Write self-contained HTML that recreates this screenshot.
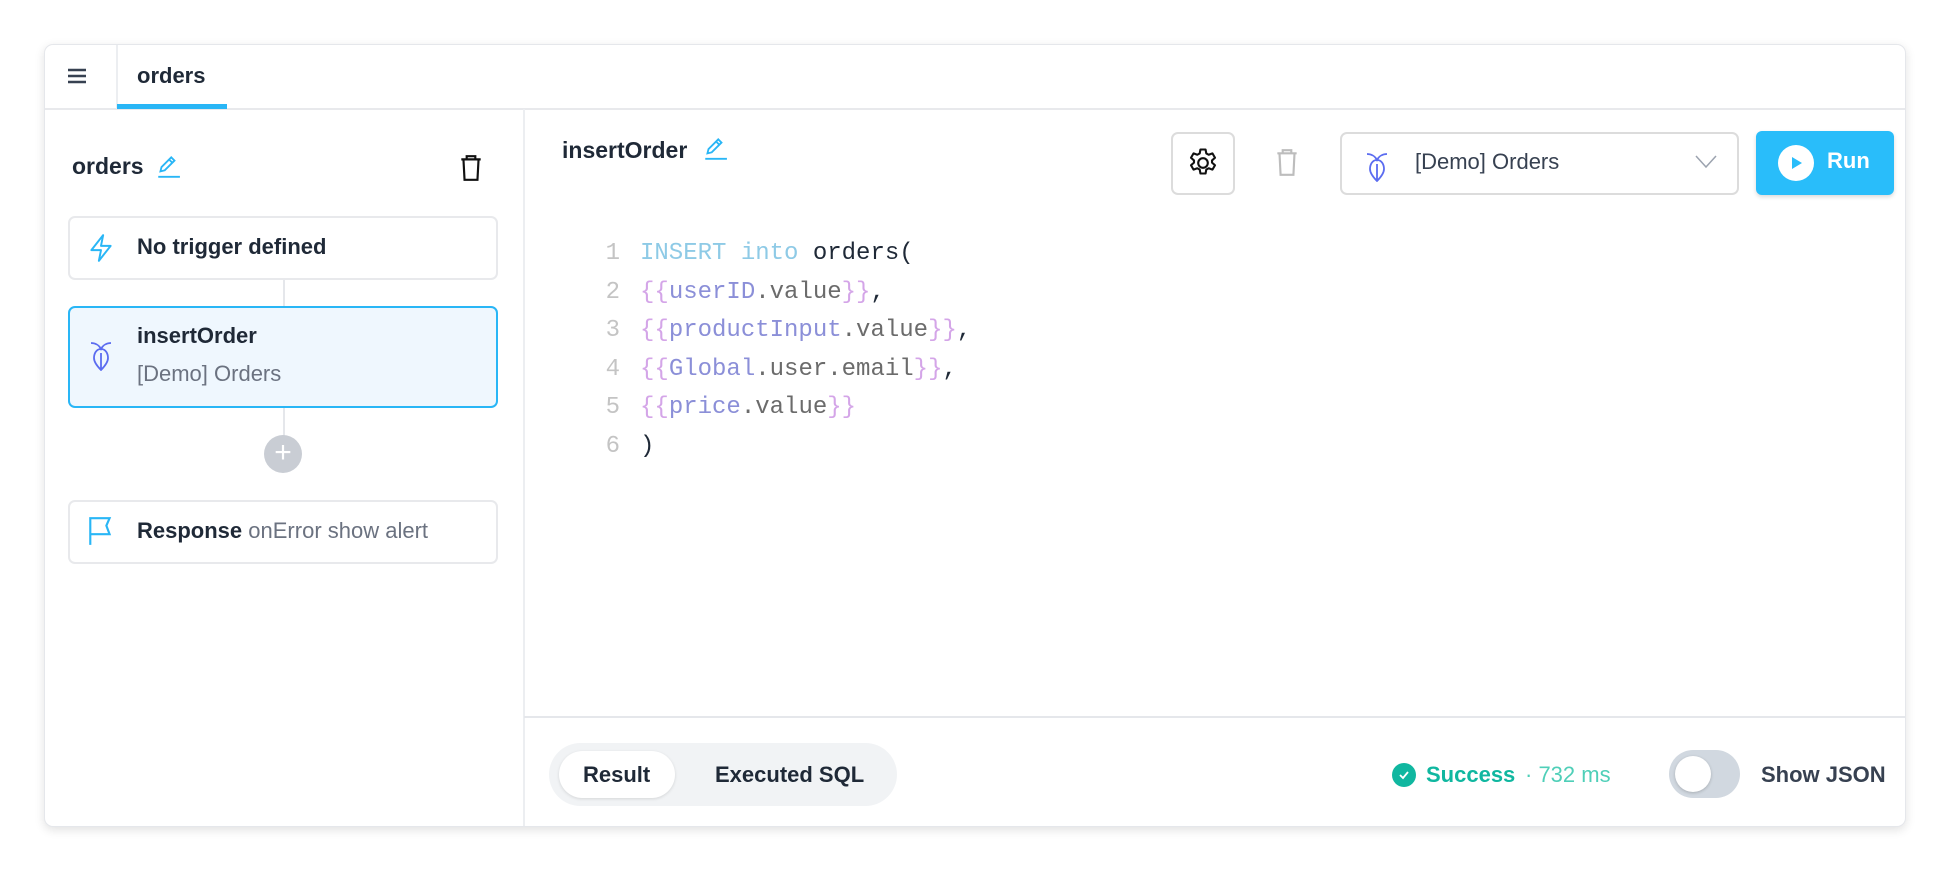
<!DOCTYPE html>
<html><head><meta charset="utf-8"><style>
*{box-sizing:border-box;margin:0;padding:0}
body{width:1950px;height:872px;background:#fff;font-family:"Liberation Sans",sans-serif;color:#1f2937;position:relative;overflow:hidden}
.card{position:absolute;left:44px;top:44px;width:1862px;height:783px;border:1px solid #e5e7eb;border-radius:9px;box-shadow:0 3px 10px rgba(0,0,0,0.12);background:#fff;overflow:hidden}
.abs{position:absolute}
.tabbar{left:0;top:0;width:100%;height:65px;border-bottom:2px solid #e8e9ec}
.box{position:absolute;left:23px;width:430px;border:2px solid #e8e9ec;border-radius:7px;background:#fff}
.t{font-size:22px;font-weight:700;color:#1f2937}
.code{font-family:"Liberation Mono",monospace;font-size:24px;line-height:38.5px;position:absolute;left:551px;top:190px;color:#1f2937}
.ln{display:inline-block;width:24px;text-align:right;color:#c4c4c4;margin-right:20px}
.kw{color:#8ecae6}.br{color:#d4a5e8}.v{color:#8b8fd8}.p{color:#6b6b6b}
</style></head><body>
<div class="card">
 <div class="abs tabbar"></div>
 <div class="abs" style="left:71px;top:0;width:2px;height:64px;background:#eceef1"></div>
 <svg class="abs" style="left:22px;top:22px" width="20" height="18" viewBox="0 0 20 18"><path d="M1 3h18M1 9h18M1 15h18" stroke="#374151" stroke-width="2.6"/></svg>
 <div class="abs t" style="left:92px;top:18px;font-size:22px">orders</div>
 <div class="abs" style="left:72px;top:59px;width:110px;height:5px;background:#29b6f6"></div>
 <div class="abs" style="left:478px;top:64px;width:2px;height:720px;background:#eceef1"></div>
 <!-- left -->
 <div class="abs t" style="left:27px;top:108px;font-size:23px">orders</div>
 <svg class="abs" style="left:110px;top:108px" width="26" height="26" viewBox="0 0 24 24"><path d="M5 17l1-4 9-9 3 3-9 9-4 1zM13 6l3 3M3 22h20" stroke="#29b6f6" stroke-width="1.7" fill="none"/></svg>
 <svg class="abs" style="left:413px;top:109px" width="26" height="28" viewBox="0 0 24 26"><path d="M3 5h18M8 5V2h8v3M5 5l1 19h12l1-19" stroke="#111" stroke-width="2" fill="none"/></svg>
 <div class="box" style="top:171px;height:64px"></div>
 <svg class="abs" style="left:43px;top:188px" width="26" height="30" viewBox="0 0 24 28"><path d="M14 2L3 16h9l-2 10 11-14h-9z" stroke="#29b6f6" stroke-width="1.8" fill="none" stroke-linejoin="round"/></svg>
 <div class="abs t" style="left:92px;top:189px">No trigger defined</div>
 <div class="abs" style="left:238px;top:235px;width:2px;height:26px;background:#e5e7eb"></div>
 <div class="box" style="top:261px;height:102px;border-color:#29b6f6;background:#eff7fe"></div>
 <svg class="abs" style="left:44px;top:294px" width="24" height="32" viewBox="0 0 24 32"><path d="M2 4c4 0 8 2 10 6 2-4 6-6 10-6M12 10c-5 0-7 5-7 9 0 4 4 9 7 12 3-3 7-8 7-12 0-4-2-9-7-9zM12 14v16" stroke="#5b6cf0" stroke-width="1.8" fill="none"/></svg>
 <div class="abs t" style="left:92px;top:278px">insertOrder</div>
 <div class="abs" style="left:92px;top:316px;font-size:22px;color:#6b7280">[Demo] Orders</div>
 <div class="abs" style="left:238px;top:363px;width:2px;height:28px;background:#e5e7eb"></div>
 <div class="abs" style="left:219px;top:390px;width:38px;height:38px;border-radius:50%;background:#c9cdd4;color:#fff;font-size:30px;text-align:center;line-height:36px">+</div>
 <div class="box" style="top:455px;height:64px"></div>
 <svg class="abs" style="left:43px;top:471px" width="26" height="30" viewBox="0 0 24 28"><path d="M2 27V2h18l-3 7 3 8H2" stroke="#29b6f6" stroke-width="2" fill="none"/></svg>
 <div class="abs" style="left:92px;top:473px;font-size:22px"><b>Response</b> <span style="color:#6b7280">onError show alert</span></div>
 <!-- right -->
 <div class="abs t" style="left:517px;top:92px;font-size:23px">insertOrder</div>
 <svg class="abs" style="left:657px;top:90px" width="26" height="26" viewBox="0 0 24 24"><path d="M5 17l1-4 9-9 3 3-9 9-4 1zM13 6l3 3M3 22h20" stroke="#29b6f6" stroke-width="1.7" fill="none"/></svg>
 <div class="abs" style="left:1126px;top:87px;width:64px;height:63px;border:2px solid #dcdcdc;border-radius:7px"></div>
 <svg class="abs" style="left:1140px;top:100px" width="36" height="36" viewBox="0 0 24 24"><path d="M10.3 2h3.4l.5 2.6 1.6.9 2.5-.9 1.7 2.9-2 1.8v1.4l2 1.8-1.7 2.9-2.5-.9-1.6.9-.5 2.6h-3.4l-.5-2.6-1.6-.9-2.5.9-1.7-2.9 2-1.8v-1.4l-2-1.8 1.7-2.9 2.5.9 1.6-.9z" transform="translate(0 1)" stroke="#111" stroke-width="1.4" fill="none" stroke-linejoin="round"/><circle cx="12" cy="12" r="3.2" stroke="#111" stroke-width="1.4" fill="none"/></svg>
 <svg class="abs" style="left:1229px;top:103px" width="26" height="30" viewBox="0 0 24 28"><path d="M3 5h18M8 5V2h8v3M5 5l1 20h12l1-20" stroke="#bdbdbd" stroke-width="2" fill="none"/></svg>
 <div class="abs" style="left:1295px;top:87px;width:399px;height:63px;border:2px solid #dcdcdc;border-radius:7px"></div>
 <svg class="abs" style="left:1320px;top:105px" width="24" height="32" viewBox="0 0 24 32"><path d="M2 4c4 0 8 2 10 6 2-4 6-6 10-6M12 10c-5 0-7 5-7 9 0 4 4 9 7 12 3-3 7-8 7-12 0-4-2-9-7-9zM12 14v16" stroke="#5b6cf0" stroke-width="1.8" fill="none"/></svg>
 <div class="abs" style="left:1370px;top:104px;font-size:22px;color:#374151">[Demo] Orders</div>
 <svg class="abs" style="left:1650px;top:110px" width="22" height="14" viewBox="0 0 22 14"><path d="M1 1l10 11L21 1" stroke="#9ca3af" stroke-width="1.5" fill="none"/></svg>
 <div class="abs" style="left:1711px;top:86px;width:138px;height:64px;background:#29bdfa;border-radius:6px;box-shadow:0 2px 4px rgba(0,0,0,0.15)"></div>
 <div class="abs" style="left:1733px;top:100px;width:36px;height:36px;border-radius:50%;background:#fff"></div>
 <svg class="abs" style="left:1745px;top:110px" width="14" height="16" viewBox="0 0 14 16"><path d="M2 2l10 6-10 6z" fill="#29bdfa"/></svg>
 <div class="abs" style="left:1782px;top:103px;font-size:22px;color:#fff;font-weight:700">Run</div>
 <div class="code">
  <div><span class="ln">1</span><span class="kw">INSERT into</span> orders(</div>
  <div><span class="ln">2</span><span class="br">{{</span><span class="v">userID</span><span class="p">.value</span><span class="br">}}</span>,</div>
  <div><span class="ln">3</span><span class="br">{{</span><span class="v">productInput</span><span class="p">.value</span><span class="br">}}</span>,</div>
  <div><span class="ln">4</span><span class="br">{{</span><span class="v">Global</span><span class="p">.user.email</span><span class="br">}}</span>,</div>
  <div><span class="ln">5</span><span class="br">{{</span><span class="v">price</span><span class="p">.value</span><span class="br">}}</span></div>
  <div><span class="ln">6</span>)</div>
 </div>
 <div class="abs" style="left:479px;top:671px;width:1383px;height:2px;background:#e5e7eb"></div>
 <div class="abs" style="left:504px;top:698px;width:348px;height:63px;border-radius:32px;background:#f1f3f5"></div>
 <div class="abs" style="left:514px;top:706px;width:116px;height:47px;border-radius:24px;background:#fff;box-shadow:0 1px 3px rgba(0,0,0,0.12)"></div>
 <div class="abs" style="left:538px;top:717px;font-size:22px;font-weight:700">Result</div>
 <div class="abs" style="left:670px;top:717px;font-size:22px;font-weight:700">Executed SQL</div>
 <div class="abs" style="left:1347px;top:718px;width:24px;height:24px;border-radius:50%;background:#10b7a0"></div>
 <svg class="abs" style="left:1353px;top:724px" width="12" height="12" viewBox="0 0 12 12"><path d="M2 6l3 3 5-6" stroke="#fff" stroke-width="1.8" fill="none"/></svg>
 <div class="abs" style="left:1381px;top:717px;font-size:22px;font-weight:700;color:#10b7a0">Success</div>
 <div class="abs" style="left:1480px;top:717px;font-size:22px;color:#4fcfb8">· 732 ms</div>
 <div class="abs" style="left:1624px;top:705px;width:71px;height:48px;border-radius:24px;background:#d1d8e0"></div>
 <div class="abs" style="left:1630px;top:711px;width:36px;height:36px;border-radius:50%;background:#fff;box-shadow:0 1px 3px rgba(0,0,0,0.2)"></div>
 <div class="abs" style="left:1716px;top:717px;font-size:22px;font-weight:700;color:#374151">Show JSON</div>
</div>
</body></html>
